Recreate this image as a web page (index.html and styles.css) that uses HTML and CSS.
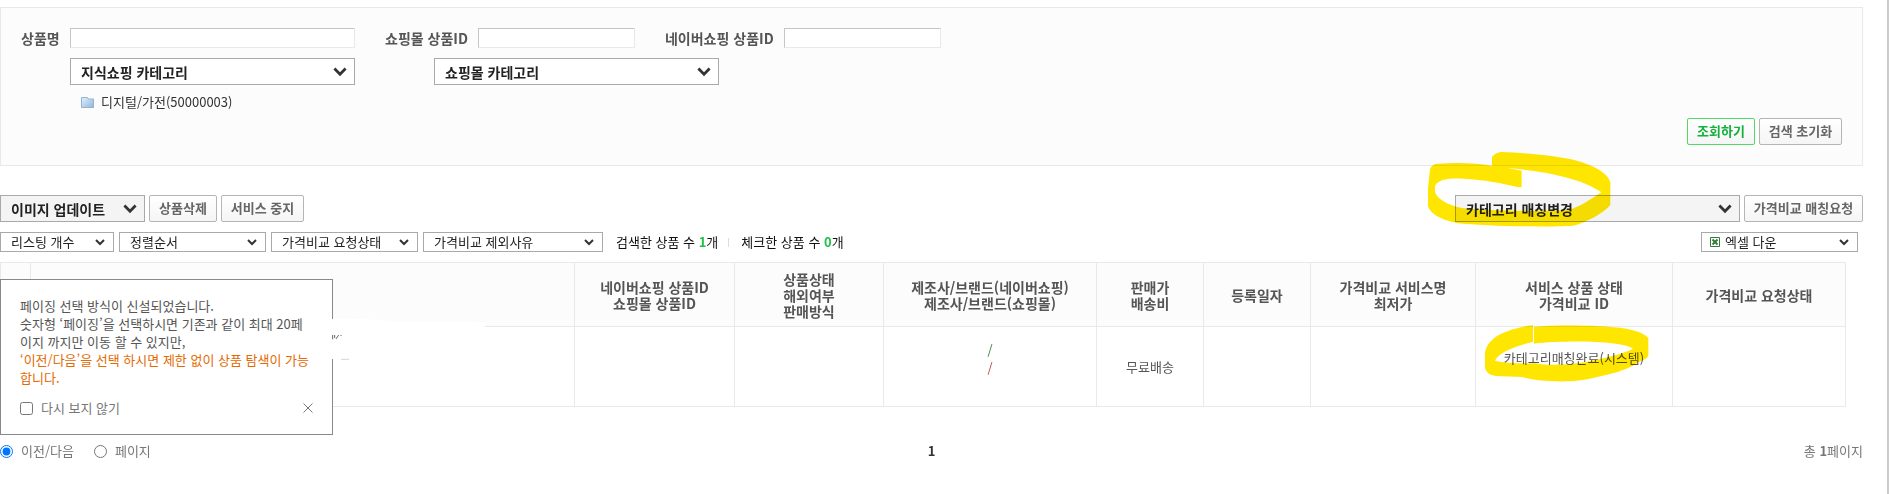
FILE: index.html
```
<!DOCTYPE html>
<html lang="ko">
<head>
    <meta charset="UTF-8">
    <meta name="viewport" content="width=device-width, initial-scale=1.0">
    <title>상품 관리</title>
    <link rel="stylesheet" href="styles.css">
</head>
<body>
    <div class="page">
        <form class="search-panel">
            <div class="search-row">
                <label for="product-name">상품명</label>
                <input type="text" id="product-name" class="wide">
                <label for="mall-id">쇼핑몰 상품ID</label>
                <input type="text" id="mall-id">
                <label for="naver-id">네이버쇼핑 상품ID</label>
                <input type="text" id="naver-id">
            </div>
            <div class="category-row">
                <select class="select large" aria-label="지식쇼핑 카테고리">
                    <option>지식쇼핑 카테고리</option>
                </select>
                <select class="select large" aria-label="쇼핑몰 카테고리">
                    <option>쇼핑몰 카테고리</option>
                </select>
            </div>
            <div class="category-path">
                <svg width="13" height="12" viewBox="0 0 13 12">
                    <defs>
                        <linearGradient id="folder" x1="0" y1="0" x2="1" y2="1">
                            <stop offset="0" stop-color="#e4f1fb"/>
                            <stop offset="1" stop-color="#8fb6d8"/>
                        </linearGradient>
                    </defs>
                    <path d="M.5 1.5h6l1 1.5h5v8.500H.5z" fill="url(#folder)" stroke="#92b5d2"/>
                </svg>
                <span>디지털/가전(50000003)</span>
            </div>
            <div class="search-buttons">
                <button type="button" class="btn btn-green">조회하기</button>
                <button type="reset" class="btn btn-mid">검색 초기화</button>
            </div>
        </form>

        <div class="toolbar actions">
            <select class="select large gray update" aria-label="이미지 업데이트">
                <option>이미지 업데이트</option>
            </select>
            <button type="button" class="btn">상품삭제</button>
            <button type="button" class="btn btn-mid">서비스 중지</button>
            <div class="marked push">
                <select class="select large gray" aria-label="카테고리 매칭변경">
                    <option>카테고리 매칭변경</option>
                </select>
                <svg class="marker marker-select" width="200" height="90" viewBox="0 0 600 270">
                    <path fill-rule="evenodd" d="M216 62V36Q226 22 244 21C330 24 400 33 450 42C520 58 565 85 571 112V180C550 205 500 232 460 242C380 247 200 244 110 234C60 224 30 205 24 184V130L30 72Q36 56 56 56C110 52 170 54 216 62ZM45 140V122C60 100 90 100 130 101C190 104 250 115 292 126H305V77L262 69C350 76 480 95 544 142C510 165 480 185 446 195C360 200 200 198 130 190C80 180 50 160 45 140Z"/>
                </svg>
            </div>
            <button type="button" class="btn btn-wide">가격비교 매칭요청</button>
        </div>

        <div class="toolbar filters">
            <select class="select count" aria-label="리스팅 개수">
                <option>리스팅 개수</option>
            </select>
            <select class="select" aria-label="정렬순서">
                <option>정렬순서</option>
            </select>
            <select class="select" aria-label="가격비교 요청상태">
                <option>가격비교 요청상태</option>
            </select>
            <select class="select reason" aria-label="가격비교 제외사유">
                <option>가격비교 제외사유</option>
            </select>
            <p class="totals">
                <span>검색한 상품 수 <strong>1</strong>개</span>
                <span>체크한 상품 수 <strong>0</strong>개</span>
            </p>
            <div class="excel push">
                <select class="select" aria-label="엑셀 다운">
                    <option>엑셀 다운</option>
                </select>
                <svg class="excel-icon" width="10" height="10" viewBox="0 0 10 10">
                    <path d="M.5.5h9v9h-9z" fill="#fff" stroke="#2f7d3b"/>
                    <path d="M2.500 2.500l5 5M7.500 2.500l-5 5" stroke="#2f7d3b" stroke-width="2"/>
                </svg>
            </div>
        </div>

        <div class="list">
            <table>
                <colgroup>
                    <col class="c-check">
                    <col>
                    <col class="c-id">
                    <col class="c-state">
                    <col class="c-brand">
                    <col class="c-price">
                    <col class="c-price">
                    <col class="c-service">
                    <col class="c-match">
                    <col class="c-request">
                </colgroup>
                <thead>
                    <tr>
                        <th></th>
                        <th></th>
                        <th>네이버쇼핑 상품ID<br>쇼핑몰 상품ID</th>
                        <th>상품상태<br>해외여부<br>판매방식</th>
                        <th>제조사/브랜드(네이버쇼핑)<br>제조사/브랜드(쇼핑몰)</th>
                        <th>판매가<br>배송비</th>
                        <th>등록일자</th>
                        <th>가격비교 서비스명<br>최저가</th>
                        <th>서비스 상품 상태<br>가격비교 ID</th>
                        <th>가격비교 요청상태</th>
                    </tr>
                </thead>
                <tbody>
                    <tr>
                        <td></td>
                        <td></td>
                        <td></td>
                        <td></td>
                        <td class="brand"><span class="naver">/</span><br><span class="mall">/</span></td>
                        <td class="fee">무료배송</td>
                        <td></td>
                        <td></td>
                        <td class="marked">
                            카테고리매칭완료(시스템)
                            <svg class="marker marker-cell" width="190" height="70" viewBox="0 0 570 210">
                                <path d="M174 16C120 22 85 38 66 48C40 65 32 85 30 98V145Q36 165 62 168L140 171C180 182 220 185 280 184C330 182 380 168 430 155C460 145 480 136 488 127Q512 120 520 108V54C505 38 480 30 440 24C380 16 250 14 177 20V71C240 64 350 62 410 70Q460 76 474 86C440 104 380 115 330 127C270 136 220 137 180 130Q100 132 60 122C70 100 110 80 174 66Z"/>
                            </svg>
                        </td>
                        <td></td>
                    </tr>
                </tbody>
            </table>

            <div class="notice">
                <p>페이징 선택 방식이 신설되었습니다.<br>숫자형 ‘페이징’을 선택하시면 기존과 같이 최대 20페<br>이지 까지만 이동 할 수 있지만,<br><em>‘이전/다음’을 선택 하시면 제한 없이 상품 탐색이 가능<br>합니다.</em></p>
                <div class="notice-foot">
                    <input type="checkbox" id="hide-notice">
                    <label for="hide-notice">다시 보지 않기</label>
                    <button type="button" class="close" aria-label="닫기">
                        <svg width="10" height="10" viewBox="0 0 10 10">
                            <path d="M.5.5l9 9M9.500.5l-9 9" stroke="#777"/>
                        </svg>
                    </button>
                </div>
                <svg class="smudge" width="210" height="80" viewBox="0 0 630 240">
                    <path d="M126 57C200 55 280 60 310 65H560Q585 66 585 82V177H126Z" fill="#fff"/>
                    <path d="M128 105v13M134 105v9M146 105l-8 12M153 105v3" fill="none" stroke="#666" stroke-width="3"/>
                    <path d="M153 178h24" stroke="#cfdccf" stroke-width="3"/>
                </svg>
            </div>
        </div>

        <div class="paging">
            <div class="paging-type">
                <input type="radio" name="paging" id="prev-next" checked>
                <label for="prev-next">이전/다음</label>
                <input type="radio" name="paging" id="by-page">
                <label for="by-page">페이지</label>
            </div>
            <strong class="current">1</strong>
            <p class="page-total">총 <strong>1</strong>페이지</p>
        </div>
    </div>
</body>
</html>
```
FILE: styles.css
```
* {
    margin: 0;
    padding: 0;
    box-sizing: border-box;
}
body {
    background: #fff;
    color: #555;
    font-family: "Noto Sans CJK KR", sans-serif;
    font-size: 13px;
    line-height: 18px;
}
input, select, button {
    font-family: inherit;
}
.page {
    min-height: 100vh;
    padding: 7px 24px 0 0;
    border-right: 2px solid #ccc;
}

/* search form */
.search-panel {
    padding: 20px;
    background: #fcfcfc;
    border: 1px solid #e9e9e9;
}
.search-row {
    display: flex;
    align-items: center;
}
.search-row label {
    margin: 0 10px 0 30px;
    font-size: 14px;
    font-weight: bold;
    white-space: nowrap;
}
.search-row label:first-child {
    width: 39px;
    margin-left: 0;
}
.search-row input {
    width: 157px;
    height: 20px;
    padding: 0 4px;
    background: #fff;
    border: 1px solid #e9e9e9;
    border-top-color: #c5c5c5;
    border-left-color: #c5c5c5;
}
.search-row .wide {
    width: 285px;
}
.category-row {
    display: flex;
    gap: 79px;
    margin: 10px 0 0 49px;
}
.category-path {
    display: flex;
    align-items: center;
    gap: 7px;
    margin: 8px 0 7px 60px;
    color: #333;
}
.search-buttons {
    display: flex;
    justify-content: flex-end;
    gap: 4px;
}

/* controls */
.select {
    width: 147px;
    height: 20px;
    padding: 0 24px 0 10px;
    appearance: none;
    background: #fff url("data:image/svg+xml,%3Csvg xmlns='http://www.w3.org/2000/svg' width='10' height='7'%3E%3Cpath d='M1 1l4 4 4-4' fill='none' stroke='%23333' stroke-width='2'/%3E%3C/svg%3E") no-repeat right 8px center;
    border: 1px solid #a9a9a9;
    border-radius: 0;
    color: #222;
    font-size: 13px;
    line-height: 18px;
}
.select.large {
    width: 285px;
    height: 27px;
    background-size: 14px 10px;
    background-position: right 7px center;
    font-size: 14px;
    font-weight: bold;
}
.select.gray {
    background-color: #f4f4f4;
}
.select.update {
    width: 145px;
}
.select.count {
    width: 114px;
}
.select.reason {
    width: 180px;
}
.btn {
    width: 68px;
    height: 27px;
    padding-bottom: 3px;
    background: linear-gradient(#fff, #f5f5f5);
    border: 1px solid #b5b5b5;
    border-radius: 2px;
    color: #666;
    font-size: 13px;
    font-weight: bold;
    white-space: nowrap;
    cursor: pointer;
}
.btn-mid {
    width: 83px;
}
.btn-wide {
    width: 119px;
}
.btn-green {
    border-color: #4fdc62;
    color: #12b13c;
}

/* toolbars */
.toolbar {
    display: flex;
    align-items: center;
}
.push {
    margin-left: auto;
}
.actions {
    gap: 4px;
    margin-top: 29px;
}
.filters {
    gap: 5px;
    margin: 10px 5px 10px 0;
}
.totals {
    display: flex;
    align-items: center;
    margin-left: 8px;
    color: #111;
}
.totals span + span {
    margin-left: 10px;
}
.totals span + span::before {
    content: "";
    display: inline-block;
    width: 1px;
    height: 9px;
    margin-right: 12px;
    background: #ddd;
}
.totals strong {
    color: #1fc04a;
}
.excel {
    position: relative;
    display: flex;
}
.excel .select {
    width: 157px;
    padding-left: 23px;
}
.excel-icon {
    position: absolute;
    top: 5px;
    left: 9px;
}

/* highlighter strokes */
.marked {
    position: relative;
}
.marked .select {
    display: block;
}
.marker {
    position: absolute;
    fill: #ffe600;
    mix-blend-mode: multiply;
    pointer-events: none;
}
.marker-select {
    top: -50px;
    left: -35px;
}
.marker-cell {
    top: -7px;
    left: -1px;
}

/* product list */
.list {
    position: relative;
}
table {
    width: calc(100% - 17px);
    table-layout: fixed;
    border-collapse: collapse;
}
th, td {
    border: 1px solid #e9e9e9;
    text-align: center;
    white-space: nowrap;
}
th {
    height: 64px;
    background: #fcfcfc;
    font-size: 14px;
    line-height: 16px;
}
td {
    height: 80px;
    padding-bottom: 18px;
}
td.brand {
    padding-bottom: 16px;
}
td.fee {
    padding-bottom: 0;
}
.c-check { width: 30px; }
.c-id { width: 160px; }
.c-state { width: 149px; }
.c-brand { width: 213px; }
.c-price { width: 107px; }
.c-service { width: 165px; }
.c-match { width: 197px; }
.c-request { width: 173px; }
.naver {
    color: #3a7d44;
}
.mall {
    color: #b5483f;
}

/* paging notice */
.notice {
    position: absolute;
    top: 17px;
    left: 0;
    width: 333px;
    padding: 17px 19px;
    background: #fff;
    border: 1px solid #888;
    white-space: nowrap;
}
.notice em {
    color: #e56a00;
    font-style: normal;
}
.notice-foot {
    display: flex;
    align-items: center;
    gap: 8px;
    margin-top: 12px;
    color: #777;
}
.close {
    display: flex;
    margin-left: auto;
    background: none;
    border: 0;
    cursor: pointer;
}
.smudge {
    position: absolute;
    top: 20px;
    left: 289px;
    pointer-events: none;
}

.paging {
    display: grid;
    grid-template-columns: 1fr auto 1fr;
    align-items: center;
    margin-top: 35px;
    color: #777;
}
.paging-type {
    display: flex;
    align-items: center;
    gap: 8px;
}
.paging-type label + input {
    margin-left: 12px;
}
.current {
    color: #333;
}
.page-total {
    text-align: right;
}
```
